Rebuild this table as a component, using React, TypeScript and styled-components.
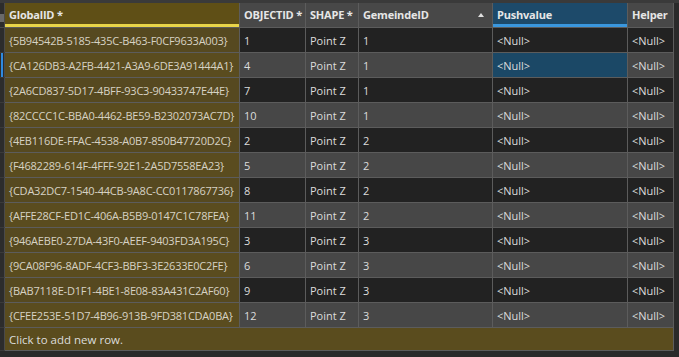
import styled, { createGlobalStyle } from "styled-components";

const GlobalStyle = createGlobalStyle`
  html, body {
    margin: 0;
    padding: 0;
    background: #2a2a2a;
  }
  body {
    font-family: "Open Sans", "Noto Sans", sans-serif;
  }
`;

type Tone = "dark" | "light";

interface Row {
  guid: string;
  oid: number;
  gemeinde: number;
}

const rows: Row[] = [
  { guid: "{5B94542B-5185-435C-B463-F0CF9633A003}", oid: 1, gemeinde: 1 },
  { guid: "{CA126DB3-A2FB-4421-A3A9-6DE3A91444A1}", oid: 4, gemeinde: 1 },
  { guid: "{2A6CD837-5D17-4BFF-93C3-90433747E44E}", oid: 7, gemeinde: 1 },
  { guid: "{82CCCC1C-BBA0-4462-BE59-B2302073AC7D}", oid: 10, gemeinde: 1 },
  { guid: "{4EB116DE-FFAC-4538-A0B7-850B47720D2C}", oid: 2, gemeinde: 2 },
  { guid: "{F4682289-614F-4FFF-92E1-2A5D7558EA23}", oid: 5, gemeinde: 2 },
  { guid: "{CDA32DC7-1540-44CB-9A8C-CC0117867736}", oid: 8, gemeinde: 2 },
  { guid: "{AFFE28CF-ED1C-406A-B5B9-0147C1C78FEA}", oid: 11, gemeinde: 2 },
  { guid: "{946AEBE0-27DA-43F0-AEEF-9403FD3A195C}", oid: 3, gemeinde: 3 },
  { guid: "{9CA08F96-8ADF-4CF3-BBF3-3E2633E0C2FE}", oid: 6, gemeinde: 3 },
  { guid: "{BAB7118E-D1F1-4BE1-8E08-83A431C2AF60}", oid: 9, gemeinde: 3 },
  { guid: "{CFEE253E-51D7-4B96-913B-9FD381CDA0BA}", oid: 12, gemeinde: 3 },
];

const SELECTED = 1;

const App = () => {
  return (
    <>
      <GlobalStyle />
      <Frame>
        <Grid>
          <Selector $header>
            <HeaderMark />
          </Selector>
          <HeaderCell $variant="key">GlobalID *</HeaderCell>
          <HeaderCell>OBJECTID *</HeaderCell>
          <HeaderCell>SHAPE *</HeaderCell>
          <HeaderCell>
            GemeindeID
            <SortArrow />
          </HeaderCell>
          <HeaderCell $variant="active">Pushvalue</HeaderCell>
          <HeaderCell>Helper</HeaderCell>

          {rows.map((r, i) => {
            const tone: Tone = i % 2 === 0 ? "dark" : "light";
            const selected = i === SELECTED;
            return [
              <Selector key={`s${i}`}>{selected && <RowMarker />}</Selector>,
              <KeyCell key={`g${i}`} $tone={tone}>{r.guid}</KeyCell>,
              <Cell key={`o${i}`} $tone={tone}>{r.oid}</Cell>,
              <Cell key={`p${i}`} $tone={tone}>Point Z</Cell>,
              <Cell key={`m${i}`} $tone={tone}>{r.gemeinde}</Cell>,
              <Cell key={`v${i}`} $tone={tone} $selected={selected}>&lt;Null&gt;</Cell>,
              <Cell key={`h${i}`} $tone={tone}>&lt;Null&gt;</Cell>,
            ];
          })}

          <Selector />
          <AddRow>Click to add new row.</AddRow>
        </Grid>
      </Frame>
    </>
  );
};

export default App;

const Frame = styled.div`
  width: 679px;
  height: 357px;
  box-sizing: border-box;
  border-top: 3px solid #3a3a3a;
  background: #2a2a2a;
  overflow: hidden;
`;

const Grid = styled.div`
  display: grid;
  grid-template-columns: 5px 235px 66px 53px 134px 135px 46px;
  grid-template-rows: 25px repeat(12, 25px) 23px;
  width: 674px;
  font-size: 11px;
  color: #dcdcdc;
`;

const cellBase = `
  box-sizing: border-box;
  display: flex;
  align-items: center;
  padding-left: 4px;
  border-right: 1px solid #5c5c5c;
  border-bottom: 1px solid #5c5c5c;
  white-space: nowrap;
  overflow: hidden;
`;

const Selector = styled.div<{ $header?: boolean }>`
  position: relative;
  box-sizing: border-box;
  background: #2c2c2c;
  border-right: 1px solid #4a4a4a;
  border-bottom: 1px solid ${(p) => (p.$header ? "#4a4a4a" : "#3a3a3a")};
`;

const HeaderMark = styled.div`
  position: absolute;
  left: 0;
  top: 11px;
  width: 4px;
  height: 8px;
  background: #6a6a6a;
`;

const RowMarker = styled.div`
  position: absolute;
  left: 1px;
  top: 0;
  bottom: 0;
  width: 2px;
  background: #2e8ae0;
`;

const headerColors = {
  plain: { bg: "#484848", line: "#484848" },
  key: { bg: "#5f4f16", line: "#e8d449" },
  active: { bg: "#1d4a6a", line: "#3a97de" },
};

const HeaderCell = styled.div<{ $variant?: "plain" | "key" | "active" }>`
  ${cellBase}
  position: relative;
  font-weight: 700;
  letter-spacing: -0.2px;
  color: #e6e6e6;
  background: ${(p) => headerColors[p.$variant ?? "plain"].bg};
  box-shadow: inset 0 -3px 0 ${(p) => headerColors[p.$variant ?? "plain"].line};
  padding-bottom: 1px;
`;

const SortArrow = styled.span`
  position: absolute;
  right: 8px;
  top: 10px;
  width: 0;
  height: 0;
  border-left: 3px solid transparent;
  border-right: 3px solid transparent;
  border-bottom: 4px solid #e0e0e0;
`;

const Cell = styled.div<{ $tone: Tone; $selected?: boolean }>`
  ${cellBase}
  background: ${(p) => (p.$selected ? "#1b4866" : p.$tone === "dark" ? "#222222" : "#474747")};
`;

const KeyCell = styled.div<{ $tone: Tone }>`
  ${cellBase}
  letter-spacing: -0.22px;
  background: ${(p) => (p.$tone === "dark" ? "#564920" : "#5a4c1f")};
  color: #d6d2c4;
`;

const AddRow = styled.div`
  ${cellBase}
  grid-column: 2 / -1;
  background: #5a4c1e;
  color: #dcdcdc;
  font-size: 11.5px;
  padding-left: 4px;
`;
